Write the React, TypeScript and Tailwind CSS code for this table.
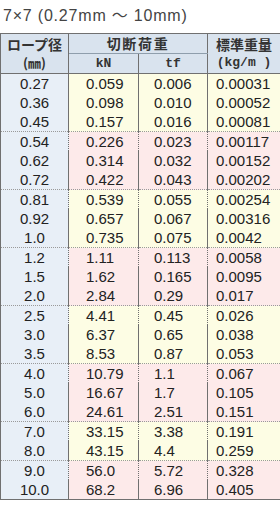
import React from 'react';

type Row = [string, string, string, string];

// rows grouped the way the sheet shades them
const groups: Row[][] = [
  [
    ['0.27', '0.059', '0.006', '0.00031'],
    ['0.36', '0.098', '0.010', '0.00052'],
    ['0.45', '0.157', '0.016', '0.00081'],
  ],
  [
    ['0.54', '0.226', '0.023', '0.00117'],
    ['0.62', '0.314', '0.032', '0.00152'],
    ['0.72', '0.422', '0.043', '0.00202'],
  ],
  [
    ['0.81', '0.539', '0.055', '0.00254'],
    ['0.92', '0.657', '0.067', '0.00316'],
    ['1.0', '0.735', '0.075', '0.0042'],
  ],
  [
    ['1.2', '1.11', '0.113', '0.0058'],
    ['1.5', '1.62', '0.165', '0.0095'],
    ['2.0', '2.84', '0.29', '0.017'],
  ],
  [
    ['2.5', '4.41', '0.45', '0.026'],
    ['3.0', '6.37', '0.65', '0.038'],
    ['3.5', '8.53', '0.87', '0.053'],
  ],
  [
    ['4.0', '10.79', '1.1', '0.067'],
    ['5.0', '16.67', '1.7', '0.105'],
    ['6.0', '24.61', '2.51', '0.151'],
  ],
  [
    ['7.0', '33.15', '3.38', '0.191'],
    ['8.0', '43.15', '4.4', '0.259'],
  ],
  [
    ['9.0', '56.0', '5.72', '0.328'],
    ['10.0', '68.2', '6.96', '0.405'],
  ],
];

const jp = "font-['Noto_Sans_CJK_JP',sans-serif]";
const mono = "font-['Liberation_Mono','Noto_Sans_CJK_JP',monospace]";

export default function App() {
  return (
    <div className="w-[280px] h-[510px] bg-white">
      <div className="h-[33px] pt-[5px] pl-[3px] text-[16px] leading-[21px] tracking-[0.05em] text-[#444] font-['Liberation_Sans','Noto_Sans_CJK_JP',sans-serif]">
        7×7 (0.27mm ～ 10mm)
      </div>
      <table className="w-[280px] table-fixed border-collapse border border-[#707070] text-[#222]">
        <colgroup>
          <col className="w-[68px]" />
          <col className="w-[70px]" />
          <col className="w-[69px]" />
          <col className="w-[73px]" />
        </colgroup>
        <thead className="bg-[#d9e3ee] text-[#333]">
          <tr className="h-[20px]">
            <th
              rowSpan={2}
              className="border-r border-b border-[#707070] p-0 align-middle font-normal"
            >
              <div className={`${jp} text-[14px] leading-[19px] font-semibold`}>ロープ径</div>
              <div className={`${jp} text-[13px] leading-[18px] font-semibold`}>(㎜)</div>
            </th>
            <th
              colSpan={2}
              className={`${jp} border-r border-b border-r-[#707070] border-b-[#8f9eac] p-0 text-[14px] leading-[19px] font-semibold tracking-[0.12em]`}
            >
              切断荷重
            </th>
            <th
              rowSpan={2}
              className="border-b border-[#707070] p-0 align-middle font-normal"
            >
              <div className={`${jp} text-[14px] leading-[19px] font-semibold`}>標準重量</div>
              <div className={`${mono} text-[13px] leading-[18px] font-bold`}>(kg/m )</div>
            </th>
          </tr>
          <tr className="h-[20px]">
            <th className={`${mono} border-r border-b border-[#707070] p-0 text-[13px] leading-[19px] font-bold`}>
              kN
            </th>
            <th className={`${mono} border-r border-b border-[#707070] p-0 text-[13px] leading-[19px] font-bold`}>
              tf
            </th>
          </tr>
        </thead>
        <tbody className="font-['Liberation_Sans',sans-serif] text-[15px]">
          {groups.map((group, gi) => {
            const tint = gi % 2 === 0 ? 'bg-[#fdfde4]' : 'bg-[#fdeaea]';
            return group.map((row, ri) => {
              const sep = gi > 0 && ri === 0 ? 'border-t border-dotted border-t-[#9a9a9a]' : '';
              return (
                <tr key={`${gi}-${ri}`} className="h-[19px] leading-[19px]">
                  <td className={`bg-[#e8eff7] border-r border-r-[#707070] p-0 text-center ${sep}`}>
                    {row[0]}
                  </td>
                  <td className={`${tint} border-r border-r-[#707070] p-0 pl-[17px] ${sep}`}>
                    {row[1]}
                  </td>
                  <td className={`${tint} border-r border-r-[#707070] p-0 pl-[15px] ${sep}`}>
                    {row[2]}
                  </td>
                  <td className={`${tint} p-0 pl-[8px] ${sep}`}>{row[3]}</td>
                </tr>
              );
            });
          })}
        </tbody>
      </table>
    </div>
  );
}
